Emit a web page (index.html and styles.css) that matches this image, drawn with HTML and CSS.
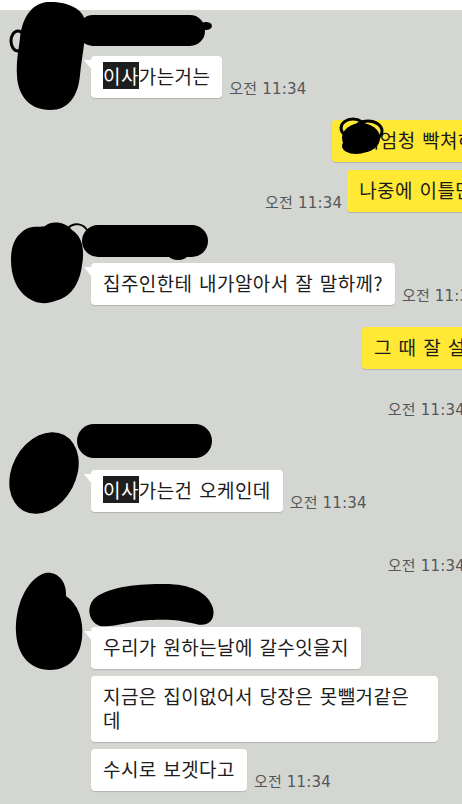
FILE: index.html
```html
<!DOCTYPE html>
<html lang="ko">
<head>
  <meta charset="UTF-8" />
  <meta name="viewport" content="width=device-width, initial-scale=1.0"/>
  <title>채팅</title>
  <link rel="stylesheet" href="styles.css">
</head>
<body>
  <div class="chat">

    <div class="group g1">
      <svg class="blot" width="230" height="114" viewBox="0 2 230 114" style="top:-26px">
        <path d="M47 2 C66 1 84 8 85 22 C86 40 82 55 80 75 C78 97 68 110 50 110 C30 110 18 96 17 76 C16 60 19 48 20 38 C22 20 30 4 47 2 Z"/>
        <ellipse cx="18" cy="41" rx="7" ry="10" fill="none" stroke="#000" stroke-width="3"/>
        <rect x="78" y="15" width="127" height="31" rx="15"/>
        <ellipse cx="206" cy="26" rx="6" ry="4"/>
      </svg>
      <div class="name">김민수</div>
      <div class="row">
        <div class="bubble first"><span class="sel">이사</span>가는거는</div>
        <span class="time">오전 11:34</span>
      </div>
    </div>

    <div class="mine m1">
      <div class="row r1">
        <div class="bubble yellow first">
          <svg class="blot" width="50" height="40" viewBox="338 116 50 40" style="left:6px;top:-4px">
            <ellipse cx="361" cy="138" rx="19" ry="15"/>
            <ellipse cx="353" cy="128" rx="12" ry="9" fill="none" stroke="#000" stroke-width="3"/>
            <ellipse cx="368" cy="131" rx="14" ry="10" fill="none" stroke="#000" stroke-width="3"/>
            <ellipse cx="356" cy="146" rx="14" ry="8"/>
          </svg>
          형이엄청 빡쳐하던데요
        </div>
      </div>
      <div class="row r2">
        <span class="time">오전 11:34</span>
        <div class="bubble yellow">나중에 이틀만 시간 내달래</div>
      </div>
    </div>

    <div class="group g3">
      <svg class="blot" width="230" height="86" viewBox="0 220 230 86" style="top:-15px">
        <path d="M22 232 C30 224 40 228 45 226 C52 220 66 222 72 230 C82 236 85 250 82 265 C80 282 72 296 58 300 C48 304 38 305 28 298 C16 290 11 275 11 260 C11 248 14 238 22 232 Z"/>
        <path d="M68 228 C74 222 84 223 88 232" fill="none" stroke="#000" stroke-width="2"/>
        <rect x="82" y="225" width="126" height="32" rx="16"/>
        <ellipse cx="178" cy="256" rx="9" ry="4"/>
      </svg>
      <div class="name">김민수</div>
      <div class="row">
        <div class="bubble first">집주인한테 내가알아서 잘 말하께?</div>
        <span class="time">오전 11:34</span>
      </div>
    </div>

    <div class="mine m3">
      <div class="row r3">
        <div class="bubble yellow first">그 때 잘 설명해줘야돼</div>
      </div>
    </div>

    <div class="time solo t1">오전 11:34</div>

    <div class="group g5">
      <svg class="blot" width="230" height="98" viewBox="0 420 230 98" style="top:-22px">
        <ellipse cx="44" cy="473" rx="32" ry="43" transform="rotate(28 44 473)"/>
        <rect x="77" y="424" width="135" height="34" rx="17"/>
      </svg>
      <div class="name">김민수</div>
      <div class="row">
        <div class="bubble first"><span class="sel">이사</span>가는건 오케인데</div>
        <span class="time">오전 11:34</span>
      </div>
    </div>

    <div class="time solo t2">오전 11:34</div>

    <div class="group g6">
      <svg class="blot" width="230" height="102" viewBox="0 570 230 102" style="top:-29px">
        <path d="M45 573 C58 571 67 582 66 596 C78 604 84 620 82 638 C80 658 68 670 50 670 C30 670 17 655 16 632 C15 608 25 580 45 573 Z"/>
        <path d="M95 598 C110 586 140 584 165 584 C190 584 208 592 213 608 C216 622 206 627 196 624 C180 620 170 619 150 620 C130 621 112 628 100 626 C88 622 86 606 95 598 Z"/>
      </svg>
      <div class="name">김민수</div>
      <div class="row">
        <div class="bubble first">우리가 원하는날에 갈수잇을지</div>
      </div>
      <div class="row">
        <div class="bubble wide">지금은 집이없어서 당장은 못뺄거같은<br>데</div>
      </div>
      <div class="row">
        <div class="bubble">수시로 보겟다고</div>
        <span class="time">오전 11:34</span>
      </div>
    </div>

  </div>
</body>
</html>
```

FILE: styles.css
```css
body {
  margin: 0;
  background-color: #fff;
  overflow: hidden;
  font-family: "Noto Sans CJK KR", sans-serif;
}

.chat {
  margin-top: 10px;
  min-height: 794px;
  padding-top: 18px;
  background-color: #d4d6d1;
  box-sizing: border-box;
}

/* 상대방 메시지 묶음 */
.group {
  position: relative;
  padding-left: 91px;
}

.blot {
  position: absolute;
  left: 0;
  overflow: visible;
  z-index: 2;
}

.name {
  height: 24px;
  margin-bottom: 4px;
  font-size: 13px;
  line-height: 18px;
  color: #333;
}

.row {
  display: flex;
  align-items: flex-end;
  gap: 7px;
  white-space: nowrap;
}

.row + .row {
  margin-top: 7px;
}

.bubble {
  position: relative;
  padding: 8px 12px 10px;
  border-radius: 4px;
  background-color: #fff;
  color: #1c1c1c;
  font-size: 19px;
  line-height: 24px;
  letter-spacing: 0.4px;
  word-spacing: 1px;
  box-shadow: 0 1px 1px rgba(0, 0, 0, 0.16);
}

.bubble.first::before {
  content: "";
  position: absolute;
  left: -7px;
  top: 4px;
  width: 8px;
  height: 10px;
  background-color: #fff;
  clip-path: polygon(0 0, 100% 0, 100% 100%);
}

.bubble.wide {
  width: 347px;
  box-sizing: border-box;
  white-space: normal;
}

.sel {
  background-color: #1e1e1e;
  color: #fff;
}

.time {
  flex-shrink: 0;
  font-family: "DejaVu Sans", "Noto Sans CJK KR", sans-serif;
  font-size: 15px;
  line-height: 18px;
  letter-spacing: 0.2px;
  color: #53575a;
}

/* 내 메시지 */
.mine .row {
  gap: 5px;
}

.mine .row + .row {
  margin-top: 8px;
}

.bubble.yellow {
  background-color: #ffe934;
}

.bubble.yellow.first::before {
  display: none;
}

.m1 { margin-top: 22px; }
.r1 { padding-left: 332px; }
.r2 { padding-left: 265px; }
.g3 { margin-top: 23px; }
.m3 { margin-top: 22px; }
.r3 { padding-left: 362px; }

.time.solo {
  display: block;
  text-align: right;
  margin-right: -3px;
}

.t1 { margin-top: 32px; }
.g5 { margin-top: 23px; }
.t2 { margin-top: 45px; }
.g6 { margin-top: 24px; }
```
